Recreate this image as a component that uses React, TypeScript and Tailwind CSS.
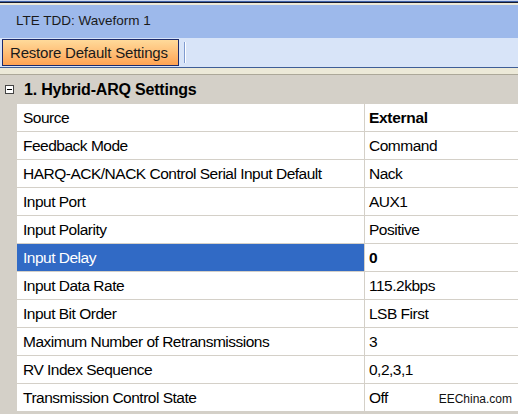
import { Fragment } from 'react'

const rows: { label: string; value: string; bold?: boolean; selected?: boolean }[] = [
  { label: 'Source', value: 'External', bold: true },
  { label: 'Feedback Mode', value: 'Command' },
  { label: 'HARQ-ACK/NACK Control Serial Input Default', value: 'Nack' },
  { label: 'Input Port', value: 'AUX1' },
  { label: 'Input Polarity', value: 'Positive' },
  { label: 'Input Delay', value: '0', bold: true, selected: true },
  { label: 'Input Data Rate', value: '115.2kbps' },
  { label: 'Input Bit Order', value: 'LSB First' },
  { label: 'Maximum Number of Retransmissions', value: '3' },
  { label: 'RV Index Sequence', value: '0,2,3,1' },
  { label: 'Transmission Control State', value: 'Off' },
]

export default function App() {
  return (
    <div className="w-[518px] h-[414px] overflow-hidden bg-[#D4D0C8] text-black font-['Liberation_Sans',Arial,sans-serif]">
      {/* window edge */}
      <div className="h-px bg-[#c9d6ee]" />
      <div className="h-px bg-[#3d5fa6]" />
      <div className="h-px bg-[#141a2e]" />
      <div className="h-[2px] bg-[#ECE9D8]" />

      {/* title */}
      <div className="h-[33px] bg-[#9DB9EB] flex items-center pl-4 text-[13.5px] text-[#1a1a1a]">
        LTE TDD: Waveform 1
      </div>

      {/* toolbar */}
      <div className="h-[30px] bg-[#D8E4F8] border-b border-[#3F5E96] flex items-start pt-px pl-[2px]">
        <button className="h-[27px] w-[177px] border border-[#1C2A6B] bg-gradient-to-b from-[#FFDA9A] to-[#FFA352] text-left pl-[7px] text-[15px] tracking-[-0.2px] text-[#1a1a1a] leading-none">
          Restore Default Settings
        </button>
        <div className="ml-[5px] mt-[3px] h-[21px] w-[2px] border-l border-[#7F9BD0] border-r border-r-white" />
      </div>
      <div className="h-[6px] bg-[#ECE9D8]" />
      <div className="h-px bg-[#ACA899]" />

      {/* section header */}
      <div className="h-[29px] flex items-center">
        <div className="ml-[5px] w-[9px] h-[9px] border border-[#444] bg-white flex items-center justify-center">
          <div className="w-[5px] h-px bg-black" />
        </div>
        <span className="ml-[10px] text-[16px] font-bold tracking-[-0.2px]">1. Hybrid-ARQ Settings</span>
      </div>

      {/* property grid */}
      <div className="ml-[17px] grid grid-cols-[347px_1fr] text-[15.5px] tracking-[-0.5px]">
        {rows.map((r, i) => (
          <Fragment key={r.label}>
            <div
              className={`h-[28px] flex items-center pl-[6px] border-b border-[#D4D0C8] whitespace-nowrap ${
                r.selected ? 'bg-[#316AC5] text-white' : 'bg-white'
              }`}
            >
              {r.label}
            </div>
            <div
              className={`relative h-[28px] flex items-center pl-[4px] bg-white border-b border-l border-[#D4D0C8] whitespace-nowrap ${
                r.bold ? 'font-bold tracking-[-0.3px]' : ''
              }`}
            >
              {r.value}
              {i === rows.length - 1 && (
                <span className="absolute right-[6px] top-[6px] text-[12px] tracking-normal text-[#111]">
                  EEChina.com
                </span>
              )}
            </div>
          </Fragment>
        ))}
      </div>
    </div>
  )
}
